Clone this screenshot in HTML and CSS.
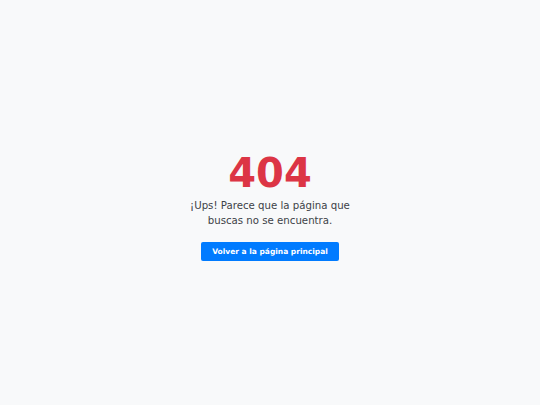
FILE: index.html
```html
<!DOCTYPE html>
<html lang="es">
<head>
<meta charset="utf-8">
<link rel="stylesheet" href="styles.css">
</head>
<body>
<main class="page">
  <div class="box">
    <h1 class="code">404</h1>
    <p class="msg">¡Ups! Parece que la página que buscas no se encuentra.</p>
    <a class="btn" href="#">Volver a la página principal</a>
  </div>
</main>
</body>
</html>
```
FILE: styles.css
```css
html, body { margin: 0; padding: 0; }
body {
  background: #f8f9fa;
  font-family: "DejaVu Sans", sans-serif;
  color: #3d4247;
}
.page {
  height: 405px;
  box-sizing: border-box;
  padding-top: 5px;
  display: flex;
  align-items: center;
  justify-content: center;
}
.box {
  display: flex;
  flex-direction: column;
  align-items: center;
  text-align: center;
  width: 170px;
}
.code {
  margin: 0;
  font-size: 40px;
  line-height: 48px;
  font-weight: bold;
  color: #dc3545;
}
.msg {
  margin: 1px 0 14px;
  font-size: 10.2px;
  line-height: 15px;
}
.btn {
  display: block;
  background: #007bff;
  color: #fff;
  text-decoration: none;
  font-size: 7.5px;
  font-weight: bold;
  padding: 4px 11px;
  line-height: 11px;
  border-radius: 2px;
}
```
